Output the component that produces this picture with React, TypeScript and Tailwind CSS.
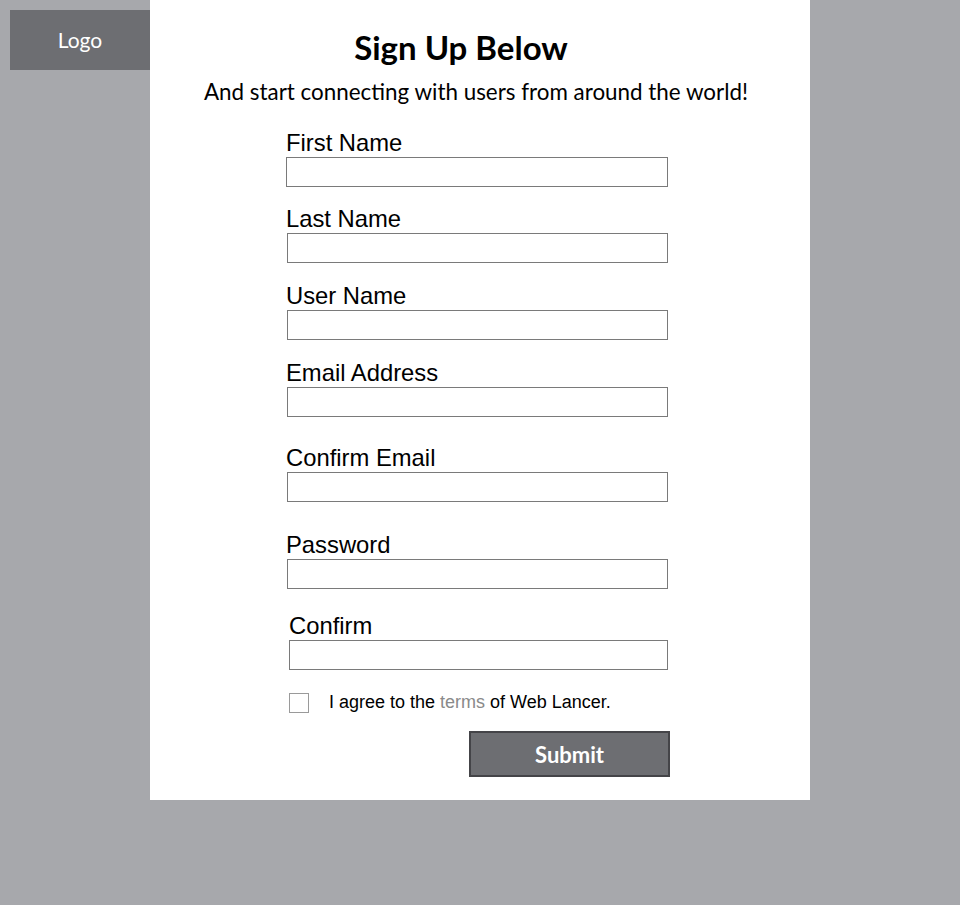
import { useState } from 'react';

const fields = [
  { label: 'First Name', wrap: 'mt-[26px]', input: 'ml-0 w-[382px]' },
  { label: 'Last Name', wrap: 'mt-[21px]', input: 'ml-[1px] w-[381px]' },
  { label: 'User Name', wrap: 'mt-[22px]', input: 'ml-[1px] w-[381px]' },
  { label: 'Email Address', wrap: 'mt-[22px]', input: 'ml-[1px] w-[381px]' },
  { label: 'Confirm Email', wrap: 'mt-[30px]', input: 'ml-[1px] w-[381px]' },
  { label: 'Password', wrap: 'mt-[32px]', input: 'ml-[1px] w-[381px]' },
  { label: 'Confirm', wrap: 'mt-[26px] pl-[3px]', input: 'ml-0 w-[379px]' },
];

export default function App() {
  const [agree, setAgree] = useState(false);

  return (
    <div className="min-h-screen bg-[#a7a8ac] flex">
      {/* Logo placeholder */}
      <div className="w-[150px] pt-[10px] pl-[10px]">
        <div
          className="h-[60px] bg-[#6d6e72] flex items-center justify-center text-white text-[21px]"
          style={{ fontFamily: "Lato, 'Open Sans', sans-serif" }}
        >
          Logo
        </div>
      </div>

      {/* Sign up card */}
      <div className="w-[660px] h-[800px] bg-white flex flex-col">
        <h1
          className="mt-[27px] text-center text-[33px] leading-[40px] font-bold text-black pr-[38px]"
          style={{ fontFamily: "Lato, 'Open Sans', sans-serif" }}
        >
          Sign Up Below
        </h1>
        <p
          className="mt-[11px] text-center text-[22.4px] leading-[28px] text-black pr-[8px]"
          style={{ fontFamily: "Lato, 'Open Sans', sans-serif" }}
        >
          And start connecting with users from around the world!
        </p>

        <form
          className="pl-[136px] flex flex-col"
          style={{ fontFamily: "'Liberation Sans', Arial, sans-serif" }}
          onSubmit={(e) => e.preventDefault()}
        >
          {fields.map((f) => (
            <div key={f.label} className={f.wrap}>
              <label className="block text-[23.8px] leading-[22px] text-black mb-[3px]">{f.label}</label>
              <input
                type="text"
                className={`${f.input} block h-[30px] border border-[#7a7a7a] bg-white outline-none`}
              />
            </div>
          ))}

          <label className="mt-[19px] ml-[3px] flex items-center cursor-pointer">
            <input
              type="checkbox"
              checked={agree}
              onChange={(e) => setAgree(e.target.checked)}
              className="appearance-none w-[20px] h-[20px] border border-[#9a9a9a] bg-white"
            />
            <span className="ml-[20px] text-[18px] text-black">
              I agree to the <span className="text-[#8a8a8a]">terms</span> of Web Lancer.
            </span>
          </label>

          <div className="mt-[15px] w-[384px] flex justify-end">
            <button
              type="submit"
              className="w-[201px] h-[46px] bg-[#6d6e72] border-2 border-[#444448] text-white text-[22px] font-bold"
              style={{ fontFamily: "Lato, 'Open Sans', sans-serif" }}
            >
              Submit
            </button>
          </div>
        </form>
      </div>
    </div>
  );
}
